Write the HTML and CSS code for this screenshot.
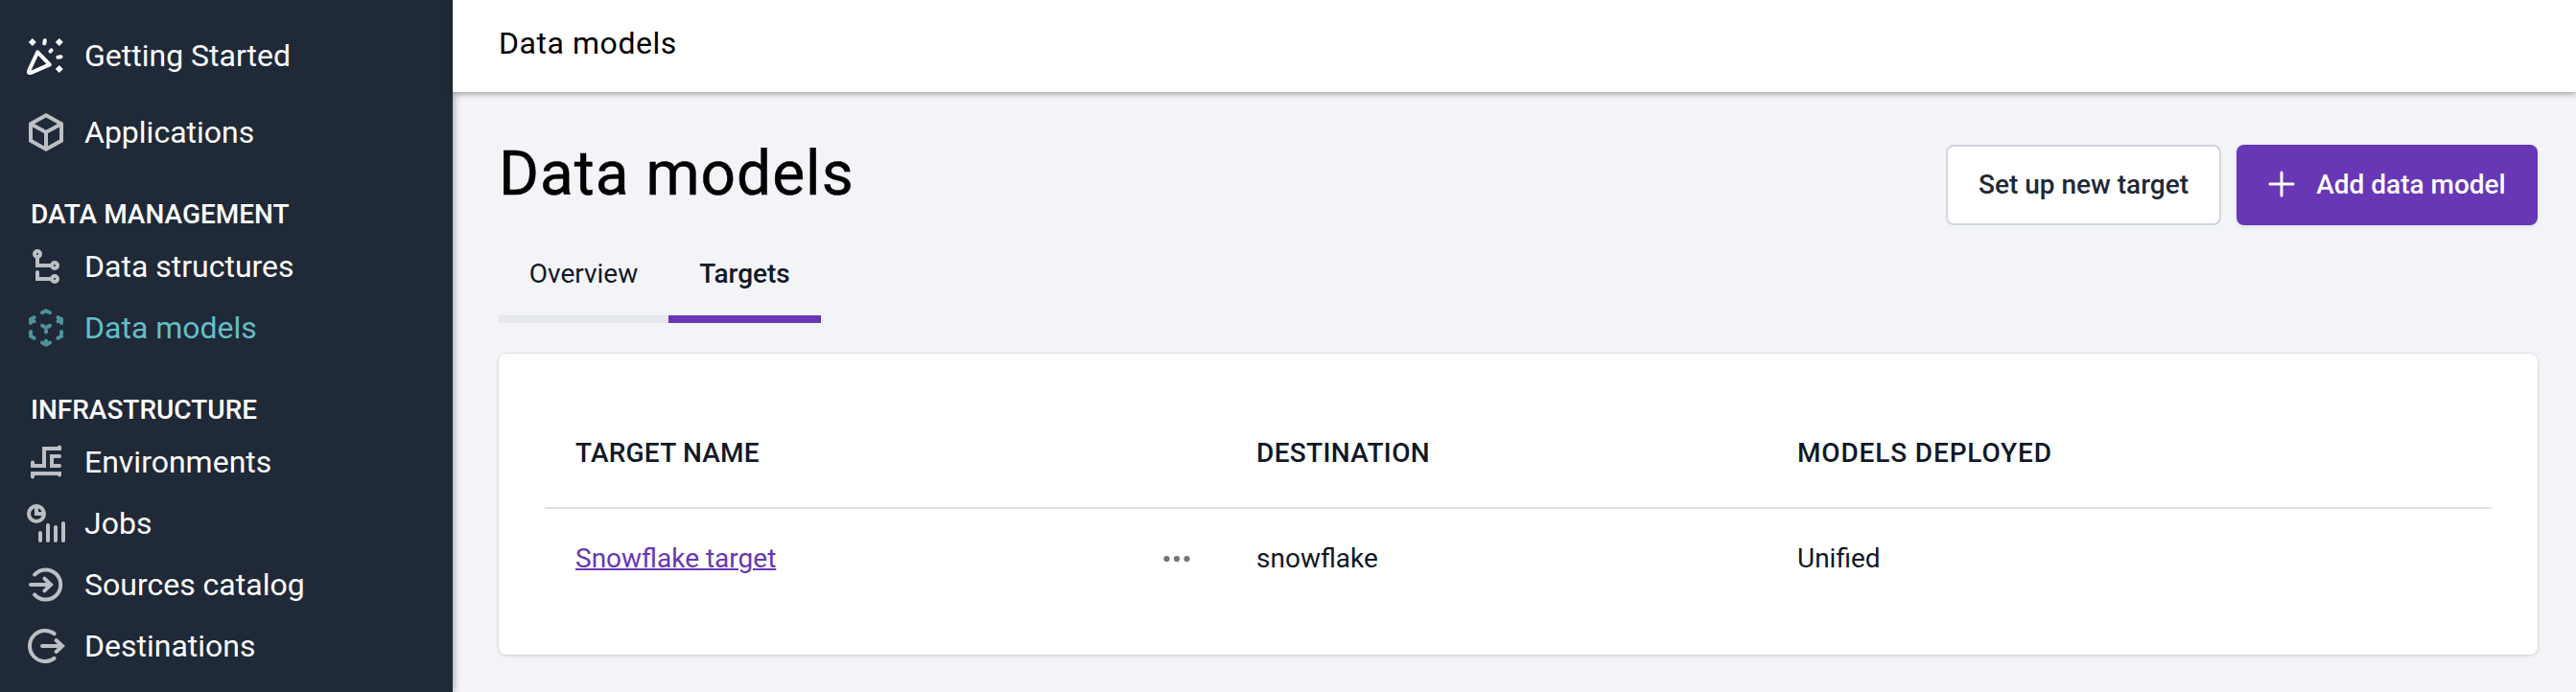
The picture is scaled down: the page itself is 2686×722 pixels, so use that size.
FILE: index.html
```html
<!DOCTYPE html>
<html lang="en">
<head>
<meta charset="utf-8">
<title>Data models</title>
<link rel="stylesheet" href="styles.css">
</head>
<body>
<div class="app">
  <nav class="sidebar">
    <a class="nav-item tall">
      <svg class="icon bright" viewBox="0 0 24 24"><path d="M7.6 10.2L13.9 16.7L4.2 20.9Q2.3 21.5 3.2 19.6Z" stroke-linejoin="round"/><path d="M11.4 4.1L11.1 5.7M14.2 9.8L14.8 9.2M18.2 12.9L19.8 12.6"/><path class="solid" d="M4.9 3L6.9 5L4.9 7L2.9 5ZM18.9 3L20.9 5L18.9 7L16.9 5ZM18.9 17L20.9 19L18.9 21L16.9 19Z"/></svg>
      <span>Getting Started</span>
    </a>
    <a class="nav-item tall">
      <svg class="icon" viewBox="0 0 24 24"><path class="butt" d="M12 3.1L20 7.6V16.4L12 20.9L4 16.4V7.6ZM4 7.6L12 12L20 7.6M12 12V20.9"/></svg>
      <span>Applications</span>
    </a>
    <h2 class="nav-heading first">DATA MANAGEMENT</h2>
    <a class="nav-item">
      <svg class="icon" viewBox="0 0 24 24"><circle cx="7.5" cy="5.5" r="1.5"/><circle cx="16.5" cy="11.5" r="1.5"/><circle cx="16.5" cy="18.5" r="1.5"/><path d="M7.5 7.5V11.5H14.5M7.5 15V18.5H14.5"/></svg>
      <span>Data structures</span>
    </a>
    <a class="nav-item active">
      <svg class="icon" viewBox="0 0 24 24"><path d="M10 4.1L12 3.1L14 4.1M4 9.5V7.6L5.8 6.6M4 7.6L5.8 8.6M20 9.5V7.6L18.2 6.6M20 7.6L18.2 8.6M4 14V16.4L5.8 17.4M20 14V16.4L18.2 17.4M10 19.8L12 20.9L14 19.8M12 20.9V18.8M10 10.9L12 12L14 10.9M12 12V14.2"/></svg>
      <span>Data models</span>
    </a>
    <h2 class="nav-heading">INFRASTRUCTURE</h2>
    <a class="nav-item">
      <svg class="icon" viewBox="0 0 24 24"><path d="M5 12.2V14H11V5H19V4.2M19 9H15V14H19M5 19.8V18H19V18.8"/></svg>
      <span>Environments</span>
    </a>
    <a class="nav-item">
      <svg class="icon" viewBox="0 0 24 24"><circle cx="7" cy="7" r="4"/><path d="M7 4.5V7H9.5M9 17V21M13 13V21M17 14V21M21 12V21"/></svg>
      <span>Jobs</span>
    </a>
    <a class="nav-item">
      <svg class="icon" viewBox="0 0 24 24"><path d="M6 6.8A7.8 7.8 0 1 1 6 17.2M4 12H14.5M11.2 8.8L14.5 12L11.2 15.2"/></svg>
      <span>Sources catalog</span>
    </a>
    <a class="nav-item">
      <svg class="icon" viewBox="0 0 24 24"><path d="M16.3 5.6A8 8 0 1 0 16.3 18.4M10 12H20.5M17.3 9L20.5 12L17.3 15"/></svg>
      <span>Destinations</span>
    </a>
  </nav>
  <div class="content">
    <header class="topbar">Data models</header>
    <main class="page">
      <div class="page-head">
        <h1 class="title">Data models</h1>
        <div class="actions">
          <button class="btn secondary">Set up new target</button>
          <button class="btn primary"><svg class="plus" viewBox="0 0 28 28"><path d="M14 2V26M2 14H26"/></svg><span>Add data model</span></button>
        </div>
      </div>
      <div class="tabs">
        <a class="tab overview">Overview</a>
        <a class="tab targets">Targets</a>
      </div>
      <section class="card">
        <div class="row head">
          <span class="col-name">TARGET NAME</span><span class="col-destination">DESTINATION</span><span class="col-models">MODELS DEPLOYED</span>
        </div>
        <div class="row">
          <span class="name"><a class="link">Snowflake target</a><svg class="dots" viewBox="0 0 28 10"><circle cx="3.5" cy="5" r="3.1"/><circle cx="14" cy="5" r="3.1"/><circle cx="24.5" cy="5" r="3.1"/></svg></span>
          <span>snowflake</span><span>Unified</span>
        </div>
      </section>
    </main>
  </div>
</div>
</body>
</html>
```
FILE: styles.css
```css
* { box-sizing: border-box; }
body { margin: 0; font-family: Roboto, sans-serif; color: #111827; background: #f3f4f8; }
.app { display: flex; height: 722px; overflow: hidden; }
.sidebar { width: 472px; flex: none; background: #1f2937; color: #fff; padding-top: 18px; box-shadow: 0 0 8px rgba(0, 0, 0, .45); }
.nav-item { display: flex; align-items: center; gap: 16px; height: 64px; padding-left: 24px; font-size: 32px; white-space: nowrap; }
.nav-item.tall { height: 80px; }
.nav-item.active { color: #64bec8; }
.nav-heading { margin: 30px 0 0; padding-left: 32px; height: 46px; line-height: 48px; font-size: 28px; font-weight: 500; }
.nav-heading.first { margin-top: 22px; }
.icon { width: 48px; height: 48px; flex: none; fill: none; stroke: currentColor; stroke-width: 2; stroke-linecap: round; opacity: .7; }
.icon.bright { opacity: 1; }
.icon .solid { fill: currentColor; stroke: none; }
.icon .butt { stroke-linecap: butt; }
.content { flex: 1; display: flex; flex-direction: column; min-width: 0; }
.topbar { height: 96px; flex: none; padding-left: 48px; line-height: 90px; font-size: 32px; letter-spacing: .55px; color: #000; background: #fff; box-shadow: 0 2px 6px rgba(0, 0, 0, .35); position: relative; }
.page { padding: 55px 40px 0 48px; }
.page-head { display: flex; justify-content: space-between; height: 90px; }
.title { margin: 0; height: 62px; line-height: 62px; font-size: 64px; font-weight: 400; letter-spacing: 1px; color: #000; -webkit-text-stroke: .5px #000; }
.actions { display: flex; gap: 16px; }
.btn { height: 84px; border-radius: 8px; font: 500 28px Roboto, sans-serif; white-space: nowrap; padding: 0 0 2px; display: flex; align-items: center; justify-content: center; }
.secondary { width: 287px; background: #fff; color: #1f2937; border: 2px solid #d1d5db; }
.primary { width: 314px; background: #6737b6; color: #fff; border: 0; gap: 22px; box-shadow: 0 2px 4px rgba(0, 0, 0, .08); }
.plus { width: 28px; height: 28px; fill: none; stroke: #fff; stroke-width: 3; stroke-linecap: round; }
.tabs { display: flex; height: 96px; }
.tab { height: 96px; line-height: 90px; font-size: 28px; text-align: center; border-bottom: 8px solid #e5e7eb; }
.overview { width: 177px; }
.targets { width: 159px; font-weight: 500; border-color: #6737b6; }
.card { margin-top: 32px; height: 314px; background: #fff; border-radius: 8px; padding: 56px 48px 0; box-shadow: 0 0 0 1px rgba(0, 0, 0, .03), 0 1px 4px rgba(0, 0, 0, .14); }
.row { display: grid; grid-template-columns: 710px 564px 1fr; height: 104px; line-height: 104px; padding-left: 32px; font-size: 28px; }
.head { font-weight: 500; height: 106px; line-height: 96px; border-bottom: 2px solid #e0e0e0; }
.col-name { letter-spacing: .2px; }
.col-destination { letter-spacing: .35px; }
.col-models { letter-spacing: .85px; }
.name { display: flex; align-items: center; justify-content: space-between; padding-right: 69px; }
.link { color: #6737b6; text-decoration: underline; text-decoration-thickness: 2px; }
.dots { width: 28px; height: 10px; fill: #757575; }
```
